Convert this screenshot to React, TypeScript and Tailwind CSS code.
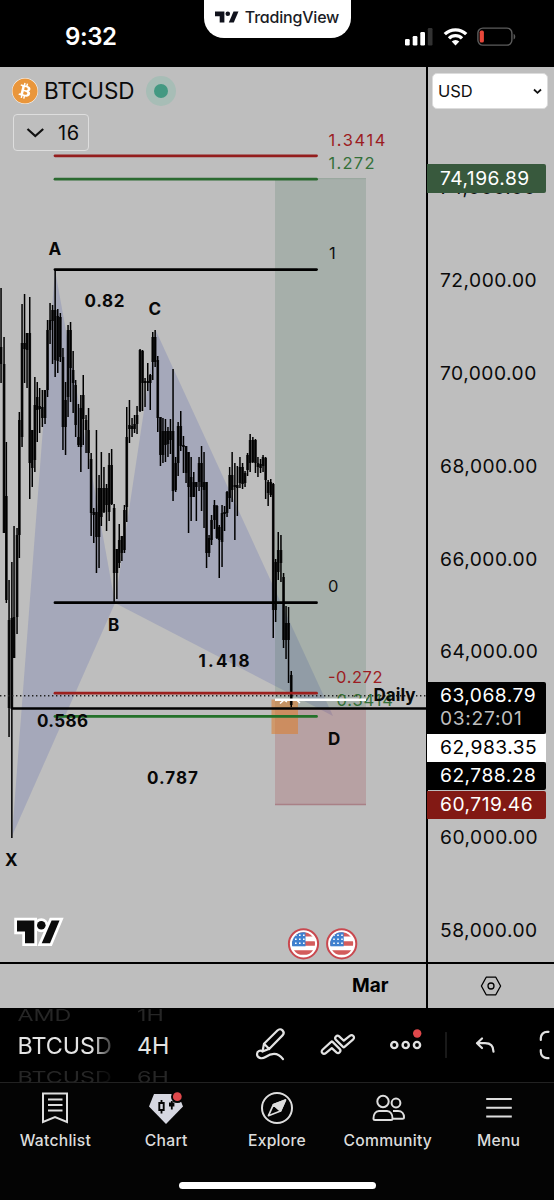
import React from "react";
import { FaBitcoin } from "react-icons/fa";

// x, high, low, body top, body bottom
const candles = [
  [1, 288, 383, 347, 364],
  [4, 337, 533, 364, 533],
  [6.3, 442, 603, 496, 600],
  [9, 580, 737, 620, 708],
  [11.8, 562, 838, 618, 709],
  [14, 526, 658, 617, 658],
  [17, 528, 634, 535, 617],
  [19.3, 412, 558, 420, 535],
  [22, 304, 447, 343, 437],
  [24.5, 294, 383, 343, 349],
  [27, 333, 388, 333, 350],
  [29.7, 297, 499, 333, 463],
  [32.2, 430, 487, 430, 468],
  [34.8, 377, 472, 405, 460],
  [37.2, 382, 442, 397, 410],
  [39.6, 388, 433, 406, 409],
  [42.3, 390, 427, 407, 418],
  [45, 390, 424, 390, 418],
  [47.5, 320, 397, 330, 390],
  [50, 303, 344, 320, 330],
  [52.5, 305, 364, 310, 321],
  [55.1, 269, 377, 310, 360],
  [57.7, 309, 373, 316, 361],
  [60.3, 313, 362, 317, 357],
  [62.9, 348, 450, 357, 427],
  [65.5, 382, 455, 400, 427],
  [68, 325, 417, 330, 397],
  [70.5, 322, 402, 330, 368],
  [73.1, 351, 413, 370, 383],
  [75.6, 380, 437, 385, 425],
  [78.4, 404, 447, 437, 445],
  [80.8, 395, 472, 408, 447],
  [83.2, 375, 445, 395, 419],
  [86, 415, 453, 420, 430],
  [88.5, 408, 469, 430, 453],
  [91.1, 453, 536, 459, 513],
  [93.7, 508, 543, 512, 515],
  [96.4, 430, 573, 512, 537],
  [99, 475, 568, 488, 537],
  [101.3, 452, 526, 488, 517],
  [103.9, 467, 513, 488, 512],
  [106.5, 484, 531, 488, 505],
  [109.1, 453, 521, 465, 512],
  [111.6, 449, 505, 465, 504],
  [114.1, 504, 603, 508, 573],
  [116.8, 549, 599, 549, 573],
  [119.2, 524, 568, 540, 563],
  [121.8, 536, 561, 536, 553],
  [124.4, 505, 553, 510, 550],
  [126.7, 407, 522, 437, 507],
  [129.4, 400, 443, 425, 429],
  [132, 418, 437, 426, 429],
  [134.5, 415, 433, 424, 429],
  [137, 406, 434, 415, 424],
  [140, 349, 412, 350, 411],
  [142.5, 350, 411, 351, 383],
  [145, 378, 407, 381, 383],
  [147.7, 363, 391, 381, 383],
  [150.2, 374, 410, 375, 383],
  [152.7, 332, 380, 337, 362],
  [155.1, 330, 367, 337, 362],
  [157.7, 356, 432, 360, 418],
  [160.4, 417, 466, 417, 455],
  [162.9, 418, 463, 431, 455],
  [165.4, 419, 462, 431, 445],
  [167.9, 427, 457, 431, 444],
  [170.4, 419, 454, 431, 440],
  [173, 369, 501, 431, 491],
  [175.6, 457, 492, 463, 490],
  [178.1, 422, 476, 426, 463],
  [180.7, 411, 451, 426, 446],
  [183.4, 436, 473, 445, 447],
  [186, 446, 483, 446, 473],
  [188.5, 452, 533, 452, 487],
  [191.1, 457, 521, 477, 497],
  [193.7, 472, 497, 482, 497],
  [196.3, 482, 521, 482, 487],
  [199, 457, 491, 463, 482],
  [201.5, 446, 511, 463, 487],
  [204, 452, 528, 482, 490],
  [206.5, 482, 568, 482, 553],
  [209, 535, 557, 538, 553],
  [211.5, 515, 545, 520, 540],
  [214.4, 500, 529, 505, 520],
  [216.9, 505, 539, 506, 538],
  [219.2, 525, 578, 527, 540],
  [222, 505, 567, 513, 542],
  [224.5, 506, 531, 512, 514],
  [227, 491, 517, 492, 513],
  [229.6, 467, 509, 475, 498],
  [232.1, 452, 502, 475, 490],
  [234.8, 463, 540, 485, 487],
  [237.3, 466, 516, 485, 488],
  [239.9, 457, 488, 467, 483],
  [242.5, 463, 489, 467, 484],
  [245, 471, 487, 473, 483],
  [247.5, 453, 476, 455, 470],
  [250.1, 434, 472, 440, 463],
  [252.8, 437, 463, 440, 462],
  [255.4, 439, 473, 440, 463],
  [257.9, 457, 477, 463, 467],
  [260.5, 459, 473, 464, 468],
  [263, 455, 472, 457, 466],
  [265.6, 457, 499, 458, 480],
  [268.1, 480, 506, 482, 493],
  [270.7, 479, 497, 482, 495],
  [273.2, 483, 638, 484, 610],
  [275.6, 559, 622, 562, 610],
  [278.2, 532, 580, 550, 572],
  [280.9, 535, 582, 550, 563],
  [283.5, 573, 648, 577, 640],
  [286, 606, 659, 623, 640],
  [288.5, 607, 683, 623, 640],
  [291.2, 671, 707, 675, 705],
];

const fibs = [
  { y: 155.8, color: "#941d1d" },
  { y: 179.2, color: "#2b6a30" },
  { y: 269.6, color: "#000" },
  { y: 602.7, color: "#000" },
  { y: 693.2, color: "#9c201e" },
  { y: 716.4, color: "#24722a" },
];

const labels = [
  { t: "1.3414", x: 328.5, y: 145.5, w: 57, c: "#9c1c22" },
  { t: "1.272", x: 328.5, y: 169, w: 46, c: "#347038" },
  { t: "1", x: 329, y: 259, w: 8, c: "#111" },
  { t: "0", x: 328, y: 592, w: 10, c: "#111" },
  { t: "-0.272", x: 328, y: 683, w: 54.5, c: "#9c1c22" },
  { t: "-0.3414", x: 328, y: 706, w: 65, c: "#347038" },
];

const points = [
  { t: "A", x: 48.5, y: 255, w: 11.5 },
  { t: "0.82", x: 84.5, y: 306.5, w: 40 },
  { t: "C", x: 148.5, y: 315, w: 12 },
  { t: "B", x: 108, y: 630.5, w: 11 },
  { t: "1.418", x: 198.5, y: 666.5, w: 51 },
  { t: "0.586", x: 37, y: 727, w: 51 },
  { t: "0.787", x: 147, y: 784, w: 51 },
  { t: "D", x: 328, y: 745, w: 12 },
  { t: "X", x: 5, y: 866, w: 11 },
];

// the 62,000 step stays empty, the live price tags sit on it
const prices = ["74,000.00", "72,000.00", "70,000.00", "68,000.00", "66,000.00", "64,000.00", "", "60,000.00", "58,000.00"];

export default function App() {
  return (
    <div className="flex h-[1200px] w-[554px] flex-col overflow-hidden bg-black font-[Inter,sans-serif]">
      <StatusBar />
      <div className="relative flex h-[895px] bg-[#bebebe]">
        <Chart />
        <Legend />
        <PriceScale />
      </div>
      <div className="flex h-[46px] border-t-2 border-black bg-[#bebebe] text-black">
        <div className="flex w-[426px] items-center justify-end pt-px pr-[37.500px]">
          <span className="text-[19px] font-bold">Mar</span>
        </div>
        <div className="flex flex-1 items-center justify-center border-l-2 border-black">
          <svg width="22" height="20" viewBox="0 0 22 20" fill="none" stroke="#000" strokeWidth="1.3">
            <path d="M6.2 1.2h9.6L20.6 10l-4.8 8.8H6.2L1.4 10z" strokeLinejoin="round" />
            <circle cx="11" cy="10" r="3" />
          </svg>
        </div>
      </div>
      <Toolbar />
      <TabBar />
    </div>
  );
}

const StatusBar = () => {
  return (
    <div className="flex h-[67px] shrink-0 text-white">
      <div className="w-[204px] pt-[21px] pl-[65px]">
        <span className="text-[24px] leading-[32px] font-semibold tracking-[-0.4px]">9:32</span>
      </div>
      <div className="flex h-[38px] w-[147px] items-center justify-center gap-[6px] rounded-b-[20px] bg-white pr-px pb-[4px]">
        <svg width="24" height="12" viewBox="0 0 46 23" fill="#10121c">
          <path d="M0 1h18v21H9V10H0z" />
          <circle cx="24.5" cy="5.3" r="4.4" />
          <path d="M35.5 1H45L36 22h-9.500z" />
        </svg>
        <span className="text-[16px] font-medium tracking-[-0.200px] whitespace-nowrap text-[#1a1c26] [font-feature-settings:'cv11','ss03']">TradingView</span>
      </div>
      <div className="flex flex-1 items-start pt-[27px] pl-[54px]">
        <svg width="28" height="19" viewBox="0 0 28 19" fill="#fff">
          <rect x="0" y="12" width="4.700" height="6.500" rx="1.200" />
          <rect x="7.700" y="9" width="4.700" height="9.500" rx="1.200" />
          <rect x="15.300" y="5" width="4.700" height="13.500" rx="1.200" />
          <rect x="22.800" y="1" width="4.700" height="17.500" rx="1.200" fill="#323232" />
        </svg>
        <svg className="ml-[10px]" width="25" height="19" viewBox="0 0 25 19" fill="none" stroke="#fff" strokeWidth="3.300">
          <path d="M1.800 7.200a15.200 15.200 0 0 1 21.400 0" />
          <path d="M6 11.400a9.200 9.200 0 0 1 13 0" />
          <path d="M12.500 18.500 8.700 14.500a5.400 5.400 0 0 1 7.600 0z" fill="#fff" stroke="none" />
        </svg>
        <svg className="ml-[9px]" width="40" height="20" viewBox="0 0 40 20" fill="none">
          <rect x="0.900" y="1.100" width="34" height="17" rx="5" stroke="#5c5c5c" strokeWidth="1.400" />
          <rect x="2.700" y="3.600" width="4.200" height="12" rx="1.600" fill="#e8473a" />
          <path d="M36.600 6.800v5.800c2.200-.8 2.200-5 0-5.800z" fill="#5c5c5c" />
        </svg>
      </div>
    </div>
  );
};

const Chart = () => {
  return (
    <svg className="block shrink-0" width="426" height="895" viewBox="0 67 426 895">
      <g fill="#5a66b0" fillOpacity="0.25">
        <path d="M12 836 55 270 115 603z" />
        <path d="M115 603 156 331 333 716z" />
      </g>
      <rect x="275" y="178" width="91" height="531" fill="#31634a" fillOpacity="0.17" />
      <rect x="275" y="709" width="91" height="96" fill="#a03c46" fillOpacity="0.22" />
      <path d="M317 178.700h49" stroke="#98a79d" />
      <path d="M275 804.500h91" stroke="#a98086" strokeWidth="1.500" />
      <rect x="271.500" y="699.500" width="26.500" height="34.500" fill="#dd7d2c" fillOpacity="0.56" />

      {candles.map(([x, high, low, top, bottom]) => (
        <g key={x} fill="#000">
          <rect x={x - 0.7} y={high} width="1.500" height={low - high} />
          <rect x={x - 1.3} y={top} width="2.700" height={bottom - top} fillOpacity="0.85" />
        </g>
      ))}

      {fibs.map((f) => (
        <path key={f.y} d={`M55 ${f.y}H316.500`} stroke={f.color} strokeWidth="2.800" strokeLinecap="round" />
      ))}
      <path d="M0 695.700H426" stroke="#222" strokeWidth="1.400" strokeDasharray="1.400 2.600" />
      <path d="M12 708.500H426" stroke="#000" strokeWidth="2.600" />

      <g fontSize="16.500">
        {labels.map((l) => (
          <text key={l.t} x={l.x} y={l.y} fill={l.c} textLength={l.w} lengthAdjust="spacing">{l.t}</text>
        ))}
      </g>
      <path d="M275 699.700H366" stroke="#fff" strokeWidth="2.400" />
      <path d="M280 703.500l4-3.500 3 2M300 703l-3.500-3" stroke="#fff" strokeWidth="1.500" fill="none" />
      <g fontSize="17" fontWeight="700" fill="#080808">
        {points.map((p) => (
          <text key={p.t} x={p.x} y={p.y} textLength={p.w} lengthAdjust="spacing">{p.t}</text>
        ))}
        <text x="373.500" y="701" fontSize="17.500" textLength="42" lengthAdjust="spacingAndGlyphs">Daily</text>
      </g>

      <g transform="translate(17 920.500)">
        <g stroke="#fff" strokeWidth="5.500" fill="#fff">
          <path d="M0 0h17.300v22.800H8V11H0z" />
          <circle cx="24.300" cy="4.700" r="4.300" />
          <path d="M34.600 0H42.500L33 22.800H24.700z" />
        </g>
        <g fill="#0c0c0c">
          <path d="M0 0h17.300v22.800H8V11H0z" />
          <circle cx="24.300" cy="4.700" r="4.300" />
          <path d="M34.600 0H42.500L33 22.800H24.700z" />
        </g>
      </g>

      <clipPath id="flag"><circle r="11.500" /></clipPath>
      <Flag x={303.5} />
      <Flag x={341.7} />
    </svg>
  );
};

const Flag = ({ x }: { x: number }) => {
  return (
    <g transform={`translate(${x} 943.800)`}>
      <circle r="14.600" fill="#fff" stroke="#c9484f" strokeWidth="2" />
      <g clipPath="url(#flag)">
        <path d="M-12-9.700H12M-12-.3H12M-12 8.700H12" stroke="#d35c5c" strokeWidth="4.600" />
        <rect x="-12" y="-12" width="14" height="14.500" fill="#3e80cf" />
        <path d="M-8.500-8.500H1.500M-8.500-4.500H1.500M-8.500-.5H1.500" stroke="#fff" strokeWidth="1.600" strokeDasharray="1.600 2.400" />
      </g>
    </g>
  );
};

const Legend = () => {
  return (
    <div className="absolute top-[9px] left-3 flex flex-col items-start text-[#0a0a0a]">
      <div className="flex h-[30px] items-center">
        <span className="rounded-full bg-white"><FaBitcoin className="size-[26px] text-[#e9963c]" /></span>
        <span className="ml-[6px] w-[90px] text-[22.500px] tracking-[-0.150px] whitespace-nowrap">BTCUSD</span>
        <span className="ml-3 flex size-[30px] items-center justify-center rounded-full bg-[#a7bdb6]">
          <span className="size-[14px] rounded-full bg-[#439982]" />
        </span>
      </div>
      <div className="mt-[8px] ml-px flex h-[37px] w-[76px] items-center rounded-[4px] border-[1.500px] border-[#dedede] pl-[12px] text-[20px]">
        <svg width="19" height="12" viewBox="0 0 19 12" fill="none" stroke="#111" strokeWidth="2.200">
          <path d="M1.500 2 9.300 9 17.200 2" />
        </svg>
        <span className="ml-[13px] tracking-[0.500px]">16</span>
      </div>
    </div>
  );
};

const PriceScale = () => {
  return (
    <div className="relative flex-1 border-l-2 border-black pt-[73.500px] text-[19.200px] leading-[24px] tracking-[0.500px] whitespace-nowrap">
      {prices.map((p, i) => (
        <div key={i} className="flex h-[92.900px] items-center pl-[12px] text-[#0a0a0a]">{p}</div>
      ))}
      <div className="absolute top-[6px] left-[4px] flex h-[36px] w-[116px] items-center justify-between rounded-[5px] border border-[#dcdcdc] bg-white pr-[5px] pl-[5px] text-[16.500px] tracking-normal text-[#111]">
        USD
        <svg width="9" height="7" viewBox="0 0 9 7" fill="none" stroke="#111" strokeWidth="1.800">
          <path d="M1 1.500 4.500 4.800 8 1.500" />
        </svg>
      </div>
      <div className="absolute top-[97px] left-[-1px] flex h-[29px] w-[119px] items-center rounded-r-[2px] bg-[#38593d] pb-[2px] pl-[13px] text-white">74,196.89</div>
      <div className="absolute top-[615px] left-[-1px] flex w-[119px] flex-col text-white *:pb-[2px] *:pl-[13px]">
        <div className="flex h-[51.500px] flex-col justify-center rounded-r-[2px] bg-black leading-[23px]">
          <span>63,068.79</span>
          <span className="tracking-[0.700px] text-[#bdbdbd]">03:27:01</span>
        </div>
        <div className="flex h-[28px] items-center bg-white text-black">62,983.35</div>
        <div className="flex h-[28px] items-center rounded-r-[2px] bg-black">62,788.28</div>
        <div className="mt-px flex h-[28.500px] items-center rounded-r-[2px] bg-[#821914]">60,719.46</div>
      </div>
    </div>
  );
};

const Toolbar = () => {
  return (
    <div className="flex h-[74px] shrink-0 overflow-hidden text-[23.300px] text-[#e4e4e4]">
      <Wheel className="ml-[17.500px] w-[95px] [mask-image:linear-gradient(to_right,#000_78%,#0003)]" items={["AMD", "BTCUSD", "BTCUSD"]} />
      <Wheel className="ml-[24.500px] w-[60px]" items={["1H", "4H", "6H"]} />
      <svg width="357" height="74" viewBox="197 1008 357 74" fill="none" stroke="#e2e2e2" strokeWidth="2.200" strokeLinecap="round" strokeLinejoin="round">
        <path d="M262.500 1051.500l1.500-7.800 13.400-13.200c1.500-1.500 3.700-1.500 5.100-.1 1.500 1.500 1.400 3.600 0 5l-13.100 13.300zM264.300 1044l5 5M262.500 1051.500c-2.200-1.700-5.400-.6-5.500 2.500 0 3.800 4.500 5.600 8.500 3 6-4 12.500-4.700 17.500 2.200" />
        <path d="M322.500 1049.700l8.600-7.800c.5-.5 1-.5 1.500 0l7 7c2.300 2.300-.9 5.500-3.200 3.500l-4.600-4.300-6 5c-2.600 2.100-5.600-1.300-3.300-3.400z" />
        <path d="M353.200 1039.300l-8.700 7.600c-.5.500-1 .5-1.500 0l-7-7c-2.300-2.300.9-5.500 3.200-3.500l4.600 4.300 6-4.900c2.600-2.100 5.700 1.400 3.400 3.500z" />
        <g strokeWidth="2.400">
          <circle cx="394.300" cy="1045" r="3.100" />
          <circle cx="405.700" cy="1045" r="3.100" />
          <circle cx="417" cy="1045" r="3.100" />
        </g>
        <circle cx="417.200" cy="1033.500" r="4.200" fill="#df484b" stroke="none" />
        <path d="M446 1032.500v25" stroke="#2b2b2b" strokeWidth="1.200" />
        <path d="M482 1038.500l-5 4.700 5 4.800M477 1043.200h8c5 0 8.500 2.500 8.500 8.500" />
        <path d="M548.500 1031.800h-1.500a6.200 6.200 0 0 0-6.200 6.200v2M548.500 1058.200h-1.500a6.200 6.200 0 0 1-6.200-6.200v-2" />
      </svg>
    </div>
  );
};

const Wheel = ({ items, className }: { items: string[]; className: string }) => {
  return (
    <div className={`relative -mt-[8px] flex h-[92px] shrink-0 flex-col justify-between leading-[30px] whitespace-nowrap ${className}`}>
      <span className="scale-y-[0.700] text-[#262626]">{items[0]}</span>
      <span>{items[1]}</span>
      <span className="scale-y-[0.700] text-[#262626]">{items[2]}</span>
    </div>
  );
};

const Tab = ({ label, children }: { label: string; children: React.ReactNode }) => {
  return (
    <div className="flex flex-1 flex-col items-center pt-[6px]">
      <svg width="40" height="38" viewBox="-20 -19 40 38" fill="none" stroke="#dedede" strokeWidth="2">
        {children}
      </svg>
      <span className="mt-[4px] text-[15.700px] leading-[20px] font-medium tracking-[0.250px] text-[#dcdcdc]">{label}</span>
    </div>
  );
};

const TabBar = () => {
  return (
    <div className="flex flex-1 flex-col border-t border-[#222] bg-[#040404]">
      <div className="flex">
        <Tab label="Watchlist">
          <path d="M-12-14.500h24V14L0 9l-12 5zM-7-8.500H7.500M-7-3H7.500M-7 2.500H7.500" />
        </Tab>
        <Tab label="Chart">
          <path d="M-12-14h24l5 12.500L0 16-17-1.500z" fill="#d6d7e1" stroke="none" />
          <circle cx="11.300" cy="-11.300" r="6.300" fill="#040404" stroke="none" />
          <path d="M-4.500-8v3m0 7v3.500" stroke="#040404" strokeWidth="1.800" />
          <path d="M-6.700-5h4.400v7h-4.400z" stroke="#040404" strokeWidth="1.900" />
          <path d="M5.800-7v8.500" stroke="#040404" strokeWidth="1.800" />
          <path d="M3-5.500h5.400v4H3z" fill="#040404" stroke="none" />
          <circle cx="11.300" cy="-11.300" r="4.400" fill="#df484b" stroke="none" />
        </Tab>
        <Tab label="Explore">
          <circle r="15" />
          <path d="M8.500-8 3.600 3-3.600-3.400z" fill="#dedede" strokeLinejoin="round" strokeWidth="1.500" />
          <path d="M8.500-8-3.500-3.500-8.500 7.700 3.600 3zM-3.600-3.400 3.600 3-8.500 7.700z" strokeLinejoin="round" strokeWidth="1.700" />
        </Tab>
        <Tab label="Community">
          <circle cx="-5" cy="-6.500" r="5.700" />
          <circle cx="8" cy="-5" r="4.400" />
          <path d="M-9 3h8c3.500 0 5.500 3.500 5.500 7.500 0 1-.5 1.500-1.500 1.500h-16c-1 0-1.500-.5-1.500-1.500C-14.500 6.500-12.500 3-9 3zM5 3h5c4 0 6 3 6 6.300 0 1-.5 1.500-1.500 1.500H5" />
        </Tab>
        <Tab label="Menu">
          <path d="M-12.800-9h25.600M-12.800-.3h25.600M-12.800 8.400h25.600" />
        </Tab>
      </div>
      <div className="mx-auto mt-[31px] h-[7px] w-[197px] rounded-full bg-white" />
    </div>
  );
};
